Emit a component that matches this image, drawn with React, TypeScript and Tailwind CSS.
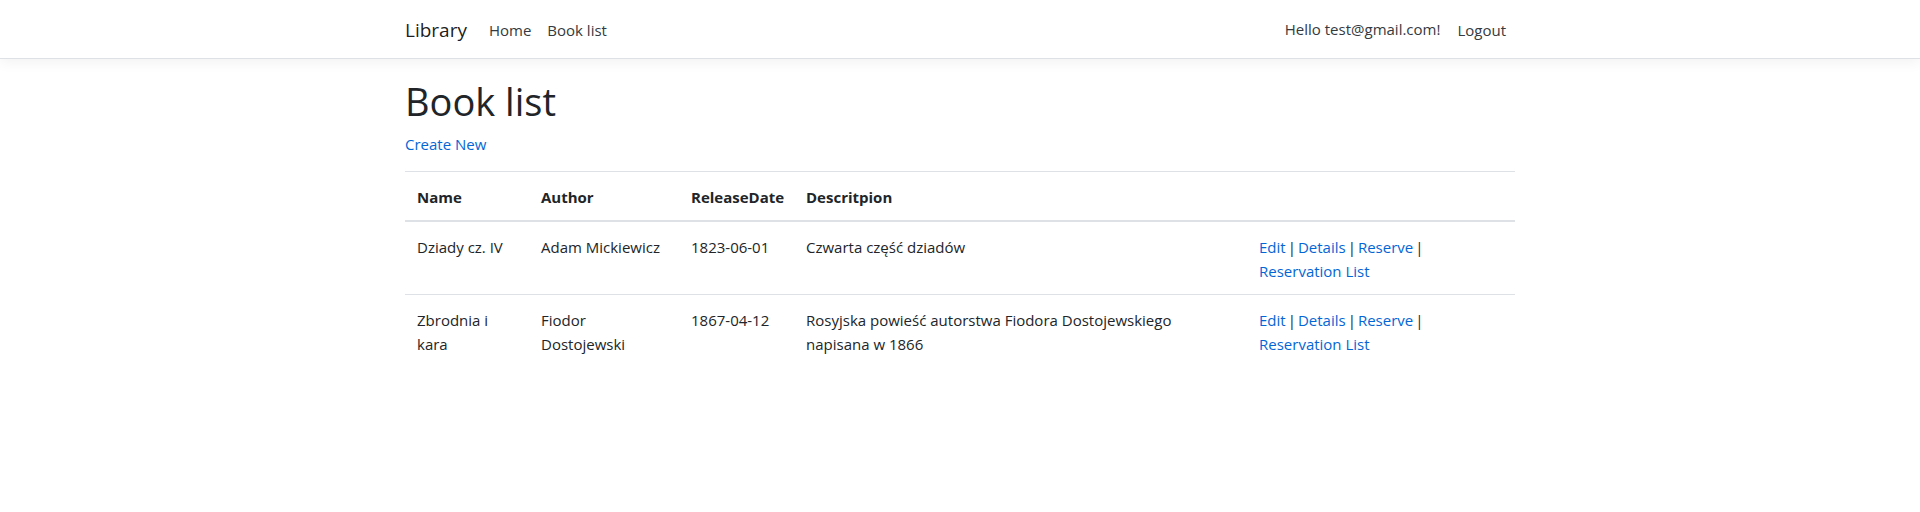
type Book = {
  name: string;
  author: string;
  releaseDate: string;
  description: string;
};

const books: Book[] = [
  {
    name: "Dziady cz. IV",
    author: "Adam Mickiewicz",
    releaseDate: "1823-06-01",
    description: "Czwarta część dziadów",
  },
  {
    name: "Zbrodnia i kara",
    author: "Fiodor Dostojewski",
    releaseDate: "1867-04-12",
    description: "Rosyjska powieść autorstwa Fiodora Dostojewskiego napisana w 1866",
  },
];

const link = "text-[#0366d6] hover:underline";
const cell = "px-3 pt-[13px] pb-[11px]";

function Header() {
  return (
    <header className="mb-[18px] border-b border-[#dee2e6] bg-white text-[#343a40] shadow-[0_4px_12px_rgba(0,0,0,0.05)]">
      <nav className="mx-auto flex max-w-[1140px] items-center px-[15px] pt-[9px] pb-[7px]">
        <a href="#" className="mr-[14px] text-[19px] leading-[30px] text-black/90">
          Library
        </a>
        <ul className="flex grow items-center">
          <li>
            <a href="#" className="block p-2">Home</a>
          </li>
          <li>
            <a href="#" className="block p-2">Book list</a>
          </li>
        </ul>
        <ul className="flex items-start">
          <li>
            <a href="#" className="block p-2">Hello test@gmail.com!</a>
          </li>
          <li>
            <button type="button" className="block cursor-pointer px-[9px] py-[9px]">
              Logout
            </button>
          </li>
        </ul>
      </nav>
    </header>
  );
}

function BookRow({ book }: { book: Book }) {
  return (
    <tr className="border-t border-[#dee2e6] align-top">
      <td className={cell}>{book.name}</td>
      <td className={cell}>{book.author}</td>
      <td className={cell}>{book.releaseDate}</td>
      <td className={cell}>{book.description}</td>
      <td className={cell}>
        <div className="flex flex-wrap gap-x-0.5">
          <a href="#" className={link}>Edit</a> | <a href="#" className={link}>Details</a> |{" "}
          <a href="#" className={link}>Reserve</a> |{" "}
          <a href="#" className={link}>Reservation List</a>
        </div>
      </td>
    </tr>
  );
}

export default function App() {
  return (
    <div className="min-h-screen bg-white font-['Open_Sans','Noto_Sans',sans-serif] text-[15px] leading-6 text-[#212529]">
      <Header />
      <main className="mx-auto max-w-[1140px] px-[15px] pb-4">
        <h1 className="mb-[7px] text-[38px] leading-[48px]">Book list</h1>
        <p className="mb-[15px]">
          <a href="#" className={link}>Create New</a>
        </p>
        <table className="w-full table-fixed border-collapse text-left">
          <colgroup>
            <col className="w-[124px]" />
            <col className="w-[150px]" />
            <col className="w-[115px]" />
            <col />
            <col className="w-[268px]" />
          </colgroup>
          <thead>
            <tr className="border-t border-b-2 border-[#dee2e6]">
              <th className={cell}>Name</th>
              <th className={cell}>Author</th>
              <th className={cell}>ReleaseDate</th>
              <th className={cell}>Descritpion</th>
              <th className={cell} />
            </tr>
          </thead>
          <tbody>
            {books.map((book) => (
              <BookRow key={book.name} book={book} />
            ))}
          </tbody>
        </table>
      </main>
    </div>
  );
}
